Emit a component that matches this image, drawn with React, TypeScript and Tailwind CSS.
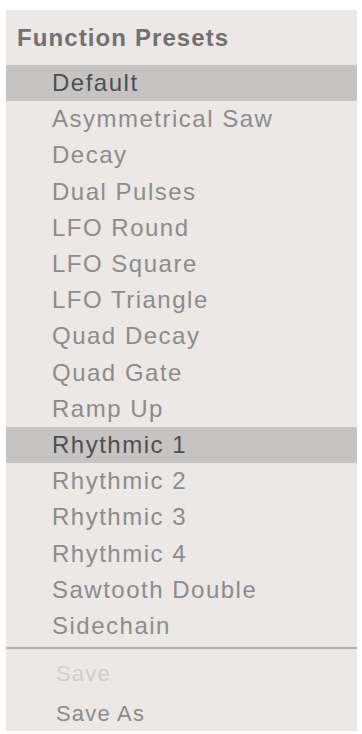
const presets = [
  'Default',
  'Asymmetrical Saw',
  'Decay',
  'Dual Pulses',
  'LFO Round',
  'LFO Square',
  'LFO Triangle',
  'Quad Decay',
  'Quad Gate',
  'Ramp Up',
  'Rhythmic 1',
  'Rhythmic 2',
  'Rhythmic 3',
  'Rhythmic 4',
  'Sawtooth Double',
  'Sidechain',
];

const selected = 'Default';
const hovered = 'Rhythmic 1';

export default function App() {
  return (
    <div className="min-h-[734px] bg-white pt-[10px] pl-[6px] font-['Liberation_Sans',Arial,sans-serif]">
      <div className="w-[351px] bg-[#ebe8e6]">
        <div className="flex h-[55px] items-center pl-[11px] pt-[1px] text-[24px] font-bold tracking-[1.1px] text-[#727070]">
          Function Presets
        </div>
        <ul>
          {presets.map((name) => {
            const active = name === selected || name === hovered;
            return (
              <li
                key={name}
                className={
                  'flex h-[36.2px] items-center pl-[46px] text-[24px] tracking-[1.5px] ' +
                  (active ? 'bg-[#c6c4c3] text-[#4f4e4e]' : 'text-[#8d8c8c]')
                }
              >
                {name}
              </li>
            );
          })}
        </ul>
        <div className="mt-[3px] h-[2px] bg-[#b2b0af]" />
        <div className="flex h-[46px] items-center pl-[50px] pt-[2px] text-[22px] tracking-[1.2px] text-[#d2d0cf]">
          Save
        </div>
        <div className="flex h-[36px] items-center pl-[50px] text-[22px] tracking-[1.2px] text-[#8d8c8c]">
          Save As
        </div>
      </div>
    </div>
  );
}
